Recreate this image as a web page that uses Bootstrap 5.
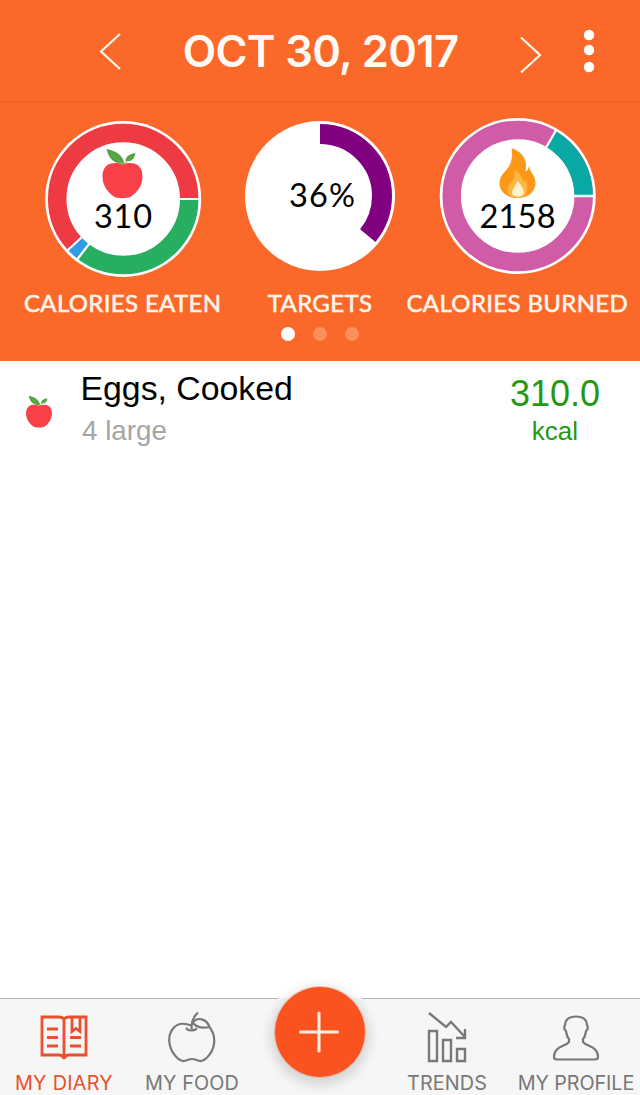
<!DOCTYPE html>
<html lang="en">
<head>
<meta charset="utf-8">
<meta name="viewport" content="width=device-width, initial-scale=1">
<title>My Diary</title>
<link rel="stylesheet" href="https://cdn.jsdelivr.net/npm/bootstrap@5.3.0/dist/css/bootstrap.min.css">
<style>
  body { font-family: "Liberation Sans", sans-serif; color: #000; background: #fff; }
  .diary-app { height: 1095px; overflow: hidden; }
  .top-bar { height: 102px; padding: 0 45px 0 98px; background: #fa682a; border-bottom: 1px solid #e9622d; }
  .top-bar h1 { font: 600 43.5px/52px Inter, sans-serif; letter-spacing: -.65px; color: #fffaf4; }
  .menu-dots { margin-left: 40px; }
  .summary { height: 259px; padding: 15px 24px 0; background: #fa682a; }
  .summary .gauge { min-width: 0; }
  .gauge-title { font: 400 24px/30px Lato, sans-serif; letter-spacing: .35px; -webkit-text-stroke: .6px #fff4e8; color: #fff4e8; margin-top: 11px; }
  .gauge text { font-family: Lato, sans-serif; font-size: 32.5px; }
  .pager { gap: 18px; padding-top: 9px; }
  .pager span { width: 14px; height: 14px; background: #ff8e5d; }
  .pager .current { background: #fff; }
  .entry { padding: 7px 40px 0 25px; height: 94px; }
  .entry-icon { margin-top: 27px; }
  .entry-name { font-size: 33.8px; line-height: 40px; margin-left: -.5px; }
  .entry-size { font-size: 27.8px; line-height: 32px; color: #a5a5a5; margin: 7px 0 0 1px; }
  .entry-energy { color: #259812; }
  .energy-value { font-size: 36px; line-height: 42px; margin-top: 5px; }
  .energy-unit { font-size: 26px; line-height: 30px; margin-top: 1px; }
  .tabs-bar { height: 97px; background: #f6f6f6; border-top: 1px solid #b2b2b2; }
  .tab-item { width: 128px; color: #787878; font: 400 19.8px/24px Inter, sans-serif; letter-spacing: .1px; padding-top: 12px; }
  .tab-item.active { color: #e9502f; letter-spacing: .3px; }
  .tab-item svg { margin-bottom: 8px; fill: none; stroke: currentColor; stroke-width: 2.2; flex: none; }
  .tab-trends { padding-right: 2px; }
  .tab-profile { letter-spacing: -.1px; }
  .add-wrap { position: relative; }
  .add-wrap::before { content: ""; position: absolute; top: -1px; left: 22px; width: 84px; height: 1px; background: #f6f6f6; }
  .add-btn { position: relative; width: 90px; height: 90px; margin-top: -12px; background: #fb531f; box-shadow: 0 4px 12px 4px rgba(0,0,0,.14), 0 0 0 1px #fbd5c5; }
</style>
</head>
<body>
<svg width="0" height="0" class="position-absolute" aria-hidden="true">
  <symbol id="apple" viewBox="0 0 42 51">
    <path fill="#f74048" d="M21 16.500C15 14 9 15 6 17c-4 3-5 7-5 12 0 9 6 16 12 20 3 1.500 13 1.500 16 0 6-4 12-11 12-20 0-5-1-9-5-12-3-2-9-3-15-.5Z"/>
    <path fill="#53a346" d="M5 1c9 2 16 5 18 15C13 16 7 11 5 1ZM24 13c1-6 5-7 10-8-1 6-4 9-10 8Z"/>
    <path fill="none" stroke="#7fae45" stroke-width="1" d="M11 7q5 6 12 9M30 8l-7 8"/>
  </symbol>
</svg>
<div class="diary-app d-flex flex-column">
  <header class="top-bar d-flex align-items-center">
    <svg width="24" height="40" viewBox="0 0 24 40" fill="none" stroke="#fff8ef" stroke-width="2.2"><path d="M22 3 3 20.500 22 38"/></svg>
    <h1 class="mb-0 mx-auto text-nowrap">OCT 30, 2017</h1>
    <svg width="24" height="40" viewBox="0 0 24 40" fill="none" stroke="#fff8ef" stroke-width="2.2" class="mt-2"><path d="M2 2.500 21 20 2 37.500"/></svg>
    <svg class="menu-dots" width="12" height="44" viewBox="0 0 12 44" fill="#fff"><circle cx="6" cy="6" r="5.200"/><circle cx="6" cy="21" r="5.200"/><circle cx="6" cy="38" r="5.200"/></svg>
  </header>

  <section class="summary">
    <div class="d-flex">
      <div class="gauge col-4 d-flex flex-column align-items-center">
        <svg width="160" height="160" viewBox="0 0 160 160">
          <circle cx="80.2" cy="82" r="78" fill="#fff"/>
          <g fill="none" stroke-width="18.5">
            <circle cx="80.2" cy="82" r="66" stroke="#28ae60" pathLength="360" stroke-dasharray="127.5 360"/>
            <circle cx="80.2" cy="82" r="66" stroke="#319ce4" pathLength="360" stroke-dasharray="10 350" stroke-dashoffset="-127.5"/>
            <circle cx="80.2" cy="82" r="66" stroke="#ee3a42" pathLength="360" stroke-dasharray="222.5 137.5" stroke-dashoffset="-137.5"/>
            <path stroke="#fff" stroke-width="2.2" d="M136 82h22M46.400 126.500 33 144M38.500 120.500 23 134.700"/>
          </g>
          <use href="#apple" x="58.500" y="31" width="42" height="51"/>
          <text x="80" y="110.500" text-anchor="middle" textLength="58">310</text>
        </svg>
        <div class="gauge-title text-nowrap">CALORIES EATEN</div>
      </div>
      <div class="gauge col-4 d-flex flex-column align-items-center">
        <svg width="160" height="160" viewBox="0 0 160 160">
          <circle cx="80" cy="79" r="75" fill="#fff"/>
          <circle cx="80" cy="79" r="62" fill="none" stroke="#80007f" stroke-width="20" pathLength="360" stroke-dasharray="129.6 360" transform="rotate(-90 80 79)"/>
          <text x="82" y="89.500" text-anchor="middle" textLength="66">36%</text>
        </svg>
        <div class="gauge-title text-nowrap">TARGETS</div>
      </div>
      <div class="gauge col-4 d-flex flex-column align-items-center">
        <svg width="160" height="160" viewBox="0 0 160 160">
          <circle cx="80.7" cy="79" r="78" fill="#fff"/>
          <circle cx="80.7" cy="79" r="66" fill="none" stroke="#d05ca8" stroke-width="18.5"/>
          <circle cx="80.7" cy="79" r="66" fill="none" stroke="#08a8a5" stroke-width="18.5" pathLength="360" stroke-dasharray="59.5 300.5" stroke-dashoffset="59.5"/>
          <path stroke="#fff" stroke-width="2.4" d="M136 79h22M108.500 31.500l11-19"/>
          <path fill="#fb9818" d="M74.700 31.300C82 34 89 39 89 48c0 2 0 4-.5 6.500 2.500-1 3-3 3.500-6 1 7 6.500 10 6.500 17.500 0 9-8 15-18 15s-18-6-18-14.500c0-9 6.500-11.500 10-18 3-6 2.500-11 2.200-17.200Z"/>
          <path fill="#fdb642" d="M77.500 53c5 3 8 7 9 12l2-2c3 8 3 17.500-8 17.500-12 0-12-9-7-14 3-4 5-8 4-13.500Z"/>
          <path fill="#fff0c8" d="M80 64c4 3 7 8 7 12-1 5-11 5-12 0 0-4 4-7 5-12Z"/>
          <text x="80.500" y="110.500" text-anchor="middle" textLength="76">2158</text>
        </svg>
        <div class="gauge-title text-nowrap">CALORIES BURNED</div>
      </div>
    </div>
    <div class="pager d-flex justify-content-center"><span class="rounded-circle current"></span><span class="rounded-circle"></span><span class="rounded-circle"></span></div>
  </section>

  <main class="flex-grow-1">
    <div class="entry d-flex">
      <svg width="28" height="33" class="entry-icon flex-shrink-0"><use href="#apple" width="28" height="33"/></svg>
      <div class="ms-4 ps-1 flex-grow-1">
        <div class="entry-name">Eggs, Cooked</div>
        <div class="entry-size">4 large</div>
      </div>
      <div class="entry-energy text-center">
        <div class="energy-value">310.0</div>
        <div class="energy-unit">kcal</div>
      </div>
    </div>
  </main>

  <nav class="tabs-bar d-flex">
    <div class="tab-item active d-flex flex-column align-items-center">
      <svg width="50" height="52" viewBox="0 0 50 52"><path stroke-width="2.800" d="M25 8q-2-2-5-2H3v38h17q4 0 5 4 1-4 5-4h17V6H30q-3 0-5 2v38M8 18h11M8 26.500h11M8 35h11M31 26.500h11M31 35h11M33 6v14.500l4-3 4 3V6"/></svg>
      <div class="text-nowrap">MY DIARY</div>
    </div>
    <div class="tab-item d-flex flex-column align-items-center">
      <svg width="50" height="52" viewBox="0 0 50 52"><path d="M24.500 14.500C16 11.500 10 12.500 6.500 17 3 21 2 25 2.200 30c.8 10 7.500 18.500 13.300 20 4 .5 5.500-2 9.500-2s5.500 2.500 9.500 2C40 48.500 47 40 47.300 30c0-6-1-9.500-5.300-14.500M19.500 16.500c0 4 9.500 3.500 10 .5M24.700 18C24 11 26 6 31 1.500M25.500 11.500c5-6 14-4 17 4.500-7 1.500-13 .5-17-4.500Z"/></svg>
      <div class="text-nowrap">MY FOOD</div>
    </div>
    <div class="tab-item add-wrap pt-0 d-flex justify-content-center">
      <button type="button" class="add-btn btn rounded-circle border-0 p-0 d-flex align-items-center justify-content-center" aria-label="Add">
        <svg class="mb-0" width="42" height="42" viewBox="0 0 42 42"><path stroke="#fff1e6" stroke-width="3" stroke-linecap="round" d="M20 2v38M1.500 21h37"/></svg>
      </button>
    </div>
    <div class="tab-item tab-trends d-flex flex-column align-items-center">
      <svg width="50" height="52" viewBox="0 0 50 52"><path stroke-width="2.400" d="M7 20h8v30H7ZM21 29h8v21h-8ZM35 38h8v12h-8ZM7 2l17 14 5-5 14 15M43 18v9h-9"/></svg>
      <div class="text-nowrap">TRENDS</div>
    </div>
    <div class="tab-item tab-profile d-flex flex-column align-items-center">
      <svg width="50" height="52" viewBox="0 0 50 52"><path d="M18 31v-3c-2-2-2.500-5-3-8-2-1.500-2-4-1-6C14.500 8 19 5.500 25 5.500S35.500 8 36 14c1 2 1 4.500-1 6-.5 3-1 6-3 8v3c4 5 15 4 15 15 0 2-1 2.500-3 2.500H6c-2 0-3-.5-3-2.500C3 35 14 36 18 31Z"/></svg>
      <div class="text-nowrap">MY PROFILE</div>
    </div>
  </nav>
</div>
<script src="https://cdn.jsdelivr.net/npm/bootstrap@5.3.0/dist/js/bootstrap.bundle.min.js"></script>
</body>
</html>
